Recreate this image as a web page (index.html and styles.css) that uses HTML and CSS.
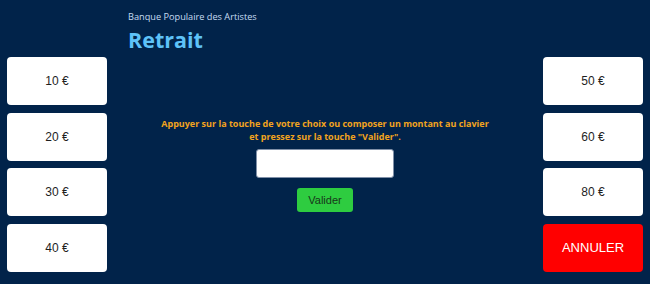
FILE: index.html
```html
<!DOCTYPE html>
<html lang="fr">
<head>
<meta charset="utf-8">
<title>Retrait</title>
<link rel="stylesheet" href="styles.css">
</head>
<body>
<div class="screen">
  <header class="header">
    <div class="bank">Banque Populaire des Artistes</div>
    <h1 class="title">Retrait</h1>
  </header>
  <main class="main">
    <div class="col">
      <button class="key">10 €</button>
      <button class="key">20 €</button>
      <button class="key">30 €</button>
      <button class="key">40 €</button>
    </div>
    <div class="center">
      <p class="hint">Appuyer sur la touche de votre choix ou composer un montant au clavier<br>et pressez sur la touche "Valider".</p>
      <input class="amount" type="text">
      <button class="validate">Valider</button>
    </div>
    <div class="col">
      <button class="key">50 €</button>
      <button class="key">60 €</button>
      <button class="key">80 €</button>
      <button class="key cancel">ANNULER</button>
    </div>
  </main>
</div>
</body>
</html>
```
FILE: styles.css
```css
html, body {
  margin: 0;
  padding: 0;
  background: #01234a;
}
.screen {
  width: 650px;
  height: 284px;
  box-sizing: border-box;
  padding: 0 7px 0 7px;
  display: flex;
  flex-direction: column;
}
.header {
  padding: 10px 0 0 121px;
  height: 57px;
  box-sizing: border-box;
}
.bank {
  font-family: "Open Sans", sans-serif;
  font-size: 9.2px;
  line-height: 13px;
  color: #c6dcf2;
}
.title {
  margin: 5px 0 0 0;
  font-family: "Open Sans", sans-serif;
  font-weight: 700;
  font-size: 21.5px;
  line-height: 24px;
  color: #5ec2f8;
}
.main {
  display: grid;
  grid-template-columns: 100px 1fr 100px;
  height: 215px;
}
.col {
  display: flex;
  flex-direction: column;
  gap: 7.5px;
}
.key {
  height: 48px;
  border: none;
  border-radius: 4px;
  background: #ffffff;
  font-family: "Liberation Sans", Arial, sans-serif;
  font-size: 12px;
  color: #1e1e1e;
  padding: 0;
}
.key.cancel {
  background: #ff0000;
  color: #ffffff;
  font-size: 13px;
}
.center {
  display: flex;
  flex-direction: column;
  align-items: center;
  padding-top: 60px;
}
.hint {
  margin: 0;
  text-align: center;
  font-family: "Open Sans", sans-serif;
  font-weight: 700;
  font-size: 9px;
  line-height: 13px;
  color: #f2a31e;
}
.amount {
  margin-top: 6px;
  width: 138px;
  height: 29px;
  box-sizing: border-box;
  border: 1px solid #8090a8;
  border-radius: 3px;
  background: #ffffff;
}
.validate {
  margin-top: 10px;
  width: 56px;
  height: 24px;
  border: none;
  border-radius: 3px;
  background: #2ecc40;
  font-family: "Liberation Sans", Arial, sans-serif;
  font-size: 11px;
  color: #17361a;
  padding: 0;
}
```
